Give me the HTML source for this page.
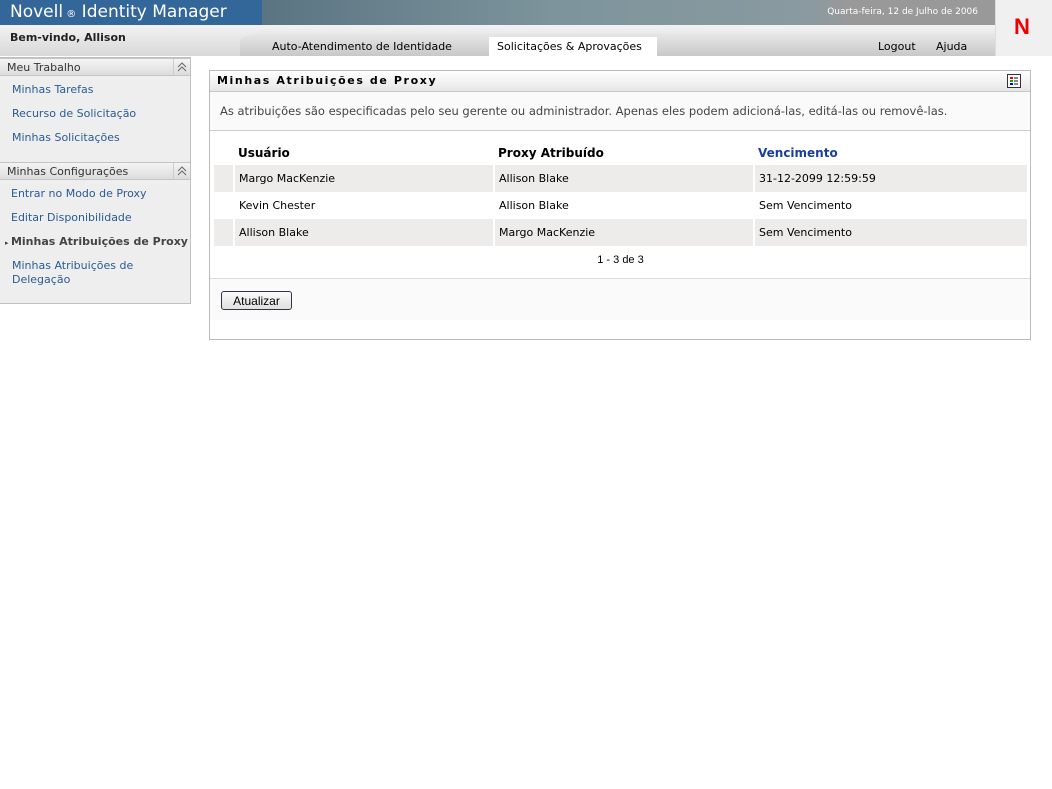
<!DOCTYPE html>
<html><head><meta charset="utf-8"><style>
*{box-sizing:border-box;margin:0;padding:0}
body{width:1052px;height:789px;background:#fff;font-family:"DejaVu Sans","Liberation Sans",sans-serif;font-size:11px;color:#000;position:relative;overflow:hidden}
.abs{position:absolute}
.top{left:0;top:0;width:262px;height:25px;background:#336699;color:#fff;font-size:17px;padding:2px 0 0 10px;font-family:"DejaVu Sans",sans-serif}
.banner{left:262px;top:0;width:733px;height:25px;background:linear-gradient(90deg,#5a7482 0%,#7d949c 40%,#8a9aa0 75%,#999 80%,#999 100%)}
.date{right:74px;top:7px;color:#fff;font-size:9px}
.nbox{left:995px;top:0;width:57px;height:56px;background:#f0f0f0;border-left:1px solid #ddd}
.row2{left:0;top:25px;width:995px;height:31px;background:linear-gradient(#f2f2f2,#d8d8d8)}
.tabsbg{left:240px;top:33px;width:755px;height:23px;background:linear-gradient(#e8e8e8,#c8c8c8);border-top-left-radius:30px 8px}
.side{left:0;top:57px;width:191px;height:247px;background:#eeeeee;border:1px solid #c0c0c0;border-left:none}
.sh{position:absolute;left:0;width:190px;height:18px;background:linear-gradient(#f4f4f4,#dcdcdc);border-top:1px solid #c4c4c4;border-bottom:1px solid #c4c4c4;color:#333;padding:2px 0 0 7px;font-size:11px}
.sh i{position:absolute;right:0;top:0;width:17px;height:16px;border-left:1px solid #ccc}
.lk{position:absolute;left:12px;color:#2a5a94;font-size:11px}
.panel{left:209px;top:70px;width:822px;height:270px;border:1px solid #bbb;background:#fff}
.ph{height:21px;background:linear-gradient(#fff,#e6e6e6);border-bottom:1px solid #c8c8c8;font-weight:bold;letter-spacing:1.6px;padding:3px 0 0 7px;font-size:11px;position:relative}
.desc{height:39px;background:#fafafa;border-bottom:1px solid #ccc;padding:12px 0 0 10px;color:#444;font-size:11.5px}
table{position:absolute;left:4px;top:70px;width:815px;border-collapse:collapse}
td{height:27px;padding:0 4px;font-size:11px;border-right:2px solid #fff}
tr.g td{background:#edecea}
th{text-align:left;height:24px;padding:0 4px;font-size:12px}
.foot{position:absolute;left:0;top:207px;width:820px;height:42px;border-top:1px solid #ddd;background:#fafafa}
button{position:absolute;left:11px;top:12px;width:71px;height:19px;font:12px "Liberation Sans",sans-serif;background:linear-gradient(#fafafa,#e0e0e0);border:1px solid #334;border-radius:3px}
</style></head><body>
<div class="abs top">Novell<span style="font-size:10px"> ®</span> Identity Manager</div>
<div class="abs banner"></div>
<div class="abs date" style="right:74px;color:#fff">Quarta-feira, 12 de Julho de 2006</div>
<div class="abs row2"></div>
<div class="abs tabsbg"></div>
<div class="abs nbox"><div style="position:absolute;left:18px;top:14px;color:#e00;font-weight:bold;font-size:22px;font-family:'Liberation Sans',sans-serif">N</div></div>
<div class="abs" style="left:10px;top:31px;font-weight:bold;font-size:11px;color:#222">Bem-vindo, Allison</div>
<div class="abs" style="left:272px;top:40px;font-size:11px">Auto-Atendimento de Identidade</div>
<div class="abs" style="left:489px;top:37px;width:168px;height:19px;background:#fff;padding:3px 0 0 8px;font-size:11px">Solicitações &amp; Aprovações</div>
<div class="abs" style="left:878px;top:40px;font-size:11px">Logout</div>
<div class="abs" style="left:936px;top:40px;font-size:11px">Ajuda</div>
<div class="abs side">
<div class="sh" style="top:0">Meu Trabalho<i><svg width="16" height="16"><path d="M4 8l4-4 4 4M4 12l4-4 4 4" fill="none" stroke="#666" stroke-width="1"/></svg></i></div>
<div class="lk" style="top:25px">Minhas Tarefas</div>
<div class="lk" style="top:49px">Recurso de Solicitação</div>
<div class="lk" style="top:73px">Minhas Solicitações</div>
<div class="sh" style="top:104px">Minhas Configurações<i><svg width="16" height="16"><path d="M4 8l4-4 4 4M4 12l4-4 4 4" fill="none" stroke="#666" stroke-width="1"/></svg></i></div>
<div class="lk" style="top:129px;left:11px">Entrar no Modo de Proxy</div>
<div class="lk" style="top:153px;left:11px">Editar Disponibilidade</div>
<div class="lk" style="top:177px;left:5px;color:#444;font-weight:bold"><span style="font-size:7px">▸ </span>Minhas Atribuições de Proxy</div>
<div class="lk" style="top:201px;line-height:14px">Minhas Atribuições de<br>Delegação</div>
</div>
<div class="abs panel">
<div class="ph">Minhas Atribuições de Proxy<span style="position:absolute;right:9px;top:3px;width:14px;height:14px;border:1px solid #333;background:#fff;font-size:0">
<svg width="12" height="12"><rect x="2" y="2" width="3" height="2" fill="#e00"/><rect x="2" y="5" width="3" height="2" fill="#0a0"/><rect x="2" y="8" width="3" height="2" fill="#00d"/><rect x="6" y="2" width="4" height="2" fill="#888"/><rect x="6" y="5" width="4" height="2" fill="#888"/><rect x="6" y="8" width="4" height="2" fill="#888"/></svg></span></div>
<div class="desc">As atribuições são especificadas pelo seu gerente ou administrador. Apenas eles podem adicioná-las, editá-las ou removê-las.</div>
<table>
<tr><th style="width:20px"></th><th style="width:260px">Usuário</th><th style="width:260px">Proxy Atribuído</th><th style="color:#1a3fa0">Vencimento</th></tr>
<tr class="g"><td></td><td>Margo MacKenzie</td><td>Allison Blake</td><td>31-12-2099 12:59:59</td></tr>
<tr><td></td><td>Kevin Chester</td><td>Allison Blake</td><td>Sem Vencimento</td></tr>
<tr class="g"><td></td><td>Allison Blake</td><td>Margo MacKenzie</td><td>Sem Vencimento</td></tr>
<tr><td colspan="4" style="text-align:center;font-family:'Liberation Sans',sans-serif;font-size:11px">1 - 3 de 3</td></tr>
</table>
<div class="foot"><button>Atualizar</button></div>
</div>
</body></html>
